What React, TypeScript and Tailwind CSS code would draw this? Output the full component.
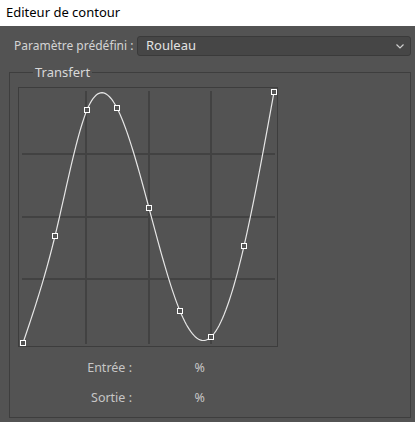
import React from "react";

const font = { fontFamily: '"Noto Sans", "Open Sans", sans-serif' };

// Control points of the curve, in screen pixels inside the graph svg
const points: [number, number][] = [
  [4, 255],
  [36, 148],
  [68, 22],
  [98, 20],
  [130, 120],
  [161, 223],
  [192, 249],
  [225, 158],
  [255, 4],
];

// natural cubic spline through the points, y as function of x
function splinePath(pts: [number, number][]) {
  const n = pts.length;
  const xs = pts.map((p) => p[0]);
  const ys = pts.map((p) => p[1]);
  const h: number[] = [];
  for (let i = 0; i < n - 1; i++) h.push(xs[i + 1] - xs[i]);
  const a = new Array(n).fill(0);
  const b = new Array(n).fill(1);
  const c = new Array(n).fill(0);
  const d = new Array(n).fill(0);
  for (let i = 1; i < n - 1; i++) {
    a[i] = h[i - 1];
    b[i] = 2 * (h[i - 1] + h[i]);
    c[i] = h[i];
    d[i] = 6 * ((ys[i + 1] - ys[i]) / h[i] - (ys[i] - ys[i - 1]) / h[i - 1]);
  }
  // thomas algorithm
  for (let i = 1; i < n; i++) {
    const m = a[i] / b[i - 1];
    b[i] -= m * c[i - 1];
    d[i] -= m * d[i - 1];
  }
  const M = new Array(n).fill(0);
  M[n - 1] = d[n - 1] / b[n - 1];
  for (let i = n - 2; i >= 0; i--) M[i] = (d[i] - c[i] * M[i + 1]) / b[i];

  let path = `M ${xs[0]} ${ys[0]}`;
  for (let i = 0; i < n - 1; i++) {
    for (let s = 1; s <= 20; s++) {
      const x = xs[i] + (h[i] * s) / 20;
      const A = (xs[i + 1] - x) / h[i];
      const B = (x - xs[i]) / h[i];
      let y =
        A * ys[i] +
        B * ys[i + 1] +
        (((A * A * A - A) * M[i] + (B * B * B - B) * M[i + 1]) * h[i] * h[i]) / 6;
      y = Math.max(2, Math.min(257, y));
      path += ` L ${x.toFixed(2)} ${y.toFixed(2)}`;
    }
  }
  return path;
}

function Graph() {
  const grid = [67, 130, 192];
  return (
    <div className="w-[260px] h-[260px] border border-[#3d3d3d] bg-[#535353]">
      <svg width="258" height="258" viewBox="0 0 258 258">
        {grid.map((g) => (
          <line key={"v" + g} x1={g} y1={3} x2={g} y2={256} stroke="#424242" strokeWidth="2" />
        ))}
        {[66, 129, 191].map((g) => (
          <line key={"h" + g} x1={3} y1={g} x2={256} y2={g} stroke="#424242" strokeWidth="2" />
        ))}
        <path d={splinePath(points)} fill="none" stroke="#e6e6e6" strokeWidth="1.2" />
        {points.map(([x, y], i) => (
          <rect
            key={i}
            x={x - 2.5}
            y={y - 2.5}
            width="5"
            height="5"
            fill="#535353"
            stroke="#ffffff"
            strokeWidth="1"
          />
        ))}
      </svg>
    </div>
  );
}

export default function App() {
  return (
    <div className="w-[415px] h-[422px] flex flex-col bg-[#535353] overflow-hidden" style={font}>
      <div className="h-[26px] bg-white flex items-center pl-[6px] text-[13px] text-black">
        Editeur de contour
      </div>

      <div className="flex items-center mt-[10px] pl-[14px] pr-[4px] h-[20px]">
        <span className="shrink-0 whitespace-nowrap text-[12px] text-[#d4d4d4] w-[123px]">
          Paramètre prédéfini :
        </span>
        <div className="flex-1 h-[20px] rounded-[3px] bg-[#464646] border border-[#3a3a3a] flex items-center justify-between pl-[8px] pr-[6px]">
          <span className="text-[13px] text-[#e2e2e2]">Rouleau</span>
          <svg width="8" height="5" viewBox="0 0 8 5">
            <path d="M0.5 0.5 L4 4 L7.5 0.5" fill="none" stroke="#cfcfcf" strokeWidth="1.2" />
          </svg>
        </div>
      </div>

      <div className="relative mt-[16px] ml-[9px] w-[402px] h-[346px] border border-[#3e3e3e] pt-[14px] pl-[8px]">
        <span className="absolute -top-[9px] left-[23px] px-[2px] bg-[#535353] text-[13px] leading-[16px] text-[#d8d8d8]">
          Transfert
        </span>
        <Graph />
        <div className="grid grid-cols-[114px_73px] items-center text-[12.5px] text-[#c6c6c6] mt-[12px] gap-y-[11px]">
          <span className="text-right">Entrée :</span>
          <span className="text-right">%</span>
          <span className="text-right">Sortie :</span>
          <span className="text-right">%</span>
        </div>
      </div>
    </div>
  );
}
